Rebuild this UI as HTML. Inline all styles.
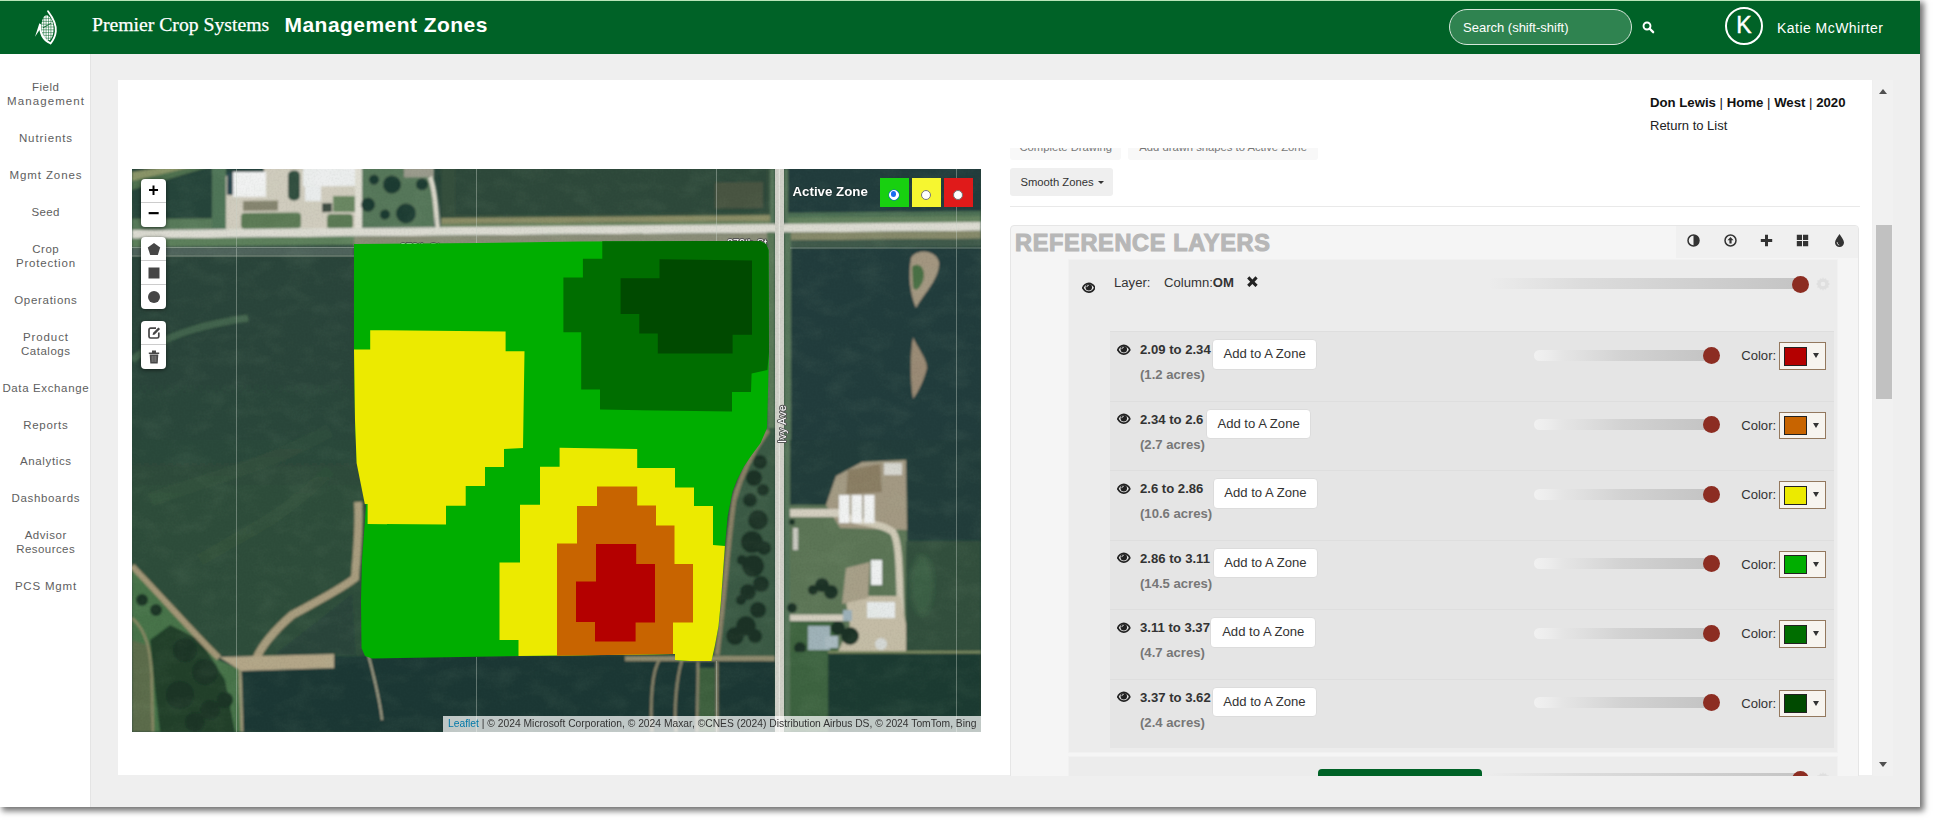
<!DOCTYPE html>
<html lang="en">
<head>
<meta charset="utf-8">
<title>Management Zones</title>
<style>
*{box-sizing:border-box;margin:0;padding:0}
html,body{width:1935px;height:822px;overflow:hidden;background:#fff}
body{font-family:"Liberation Sans",Arial,sans-serif;position:relative}
#app{position:absolute;left:0;top:0;width:1920px;height:807px;background:#efefef;overflow:hidden;box-shadow:3px 3px 6px 1px rgba(0,0,0,.55)}
#hdr{position:absolute;left:0;top:0;width:1920px;height:54px;background:#006227;border-top:1px solid #b9e5b9}
#side{position:absolute;left:0;top:54px;width:91px;height:753px;background:#fff;border-right:1px solid #e4e4e4}
#card{position:absolute;left:118px;top:80px;width:1754px;height:695px;background:#fff;overflow:hidden}

#logo{position:absolute;left:25px;top:4px;width:45px;height:45px}
#brand{-webkit-text-stroke:.25px #fff;position:absolute;left:92px;top:11.3px;font-family:"Liberation Serif","Times New Roman",serif;font-size:19.7px;color:#fff;line-height:24px;white-space:nowrap}
#ptitle{position:absolute;left:284.5px;top:10.8px;font-family:"Liberation Sans",Arial,sans-serif;font-weight:bold;font-size:21px;color:#fff;line-height:26px;white-space:nowrap;letter-spacing:.46px}
#search{position:absolute;left:1449px;top:8px;width:183px;height:36px;border:1px solid #d6e6da;border-radius:18px;background:#2f8350;color:#fff;font-size:13px;line-height:35px;padding-left:13px;white-space:nowrap}
#sicon{position:absolute;left:1642px;top:20.3px;width:12.5px;height:12.5px}
#avatar{position:absolute;left:1725px;top:6px;width:38px;height:38px;border:2px solid #fff;border-radius:50%;color:#fff;font-size:23px;line-height:33px;text-align:center;-webkit-text-stroke:.45px #fff}
#uname{position:absolute;left:1777px;top:17px;color:#fff;font-size:14px;line-height:20px;white-space:nowrap;letter-spacing:.46px}
.nav{position:absolute;left:0;width:91px;text-align:center;font-size:11.5px;line-height:14px;color:#5e5e5e;white-space:nowrap;letter-spacing:.45px}
#pinfo{position:absolute;left:1650px;top:95px;font-size:13.2px;line-height:15px;color:#111;white-space:nowrap}
#pinfo b{font-weight:bold}
#pret{position:absolute;left:1650px;top:118px;font-size:13px;line-height:15px;color:#222;white-space:nowrap}

#map{position:absolute;left:132px;top:169px;width:849px;height:563px;overflow:hidden;background:#2c4936}
#mapsvg{position:absolute;left:0;top:0;display:block}
.lbar{position:absolute;left:9px;width:25px;background:#fff;border-radius:4px;box-shadow:0 1px 4px rgba(0,0,0,.55)}
.lbar div{width:25px;height:24px;border-bottom:1px solid #ccc;position:relative;text-align:center;color:#000;font-weight:bold;font-family:"Liberation Sans",Arial,sans-serif}
.lbar div:last-child{border-bottom:0}
.lbar svg{position:absolute;left:5.5px;top:5px;width:14px;height:14px}
#az{position:absolute;left:660.5px;top:15px;font-size:13.3px;font-weight:bold;color:#fff;line-height:16px;white-space:nowrap;text-shadow:0 0 2px rgba(0,0,0,.5)}
.zb{position:absolute;top:9px;width:28.6px;height:29px}
.zb i{position:absolute;left:9.2px;top:11.6px;width:10px;height:10px;border-radius:50%;background:#fff;border:1px solid #767676}
.zb i.on{border:1.5px solid #fff;background:#fff;box-shadow:0 0 0 .5px #0a64d8}
.zb i.on:after{content:"";position:absolute;left:.8px;top:.8px;width:5.4px;height:5.4px;border-radius:50%;background:#1a6cf0}
#attr{position:absolute;right:0;bottom:0;height:16px;width:538px;background:rgba(255,255,255,.72);font-size:10.3px;line-height:16px;color:#333;padding-left:5px;white-space:nowrap}
#attr span{color:#0078a8}

#rp{position:absolute;left:1010px;top:147.5px;width:862px;height:628.5px;overflow:hidden;font-size:13.125px;color:#333}
#rp .a{position:absolute}
.dbtn{position:absolute;top:-13px;height:27.4px;padding-top:.6px;background:#f8f8f8;border-radius:3px;color:#777;font-size:11.25px;line-height:27.4px;text-align:center;white-space:nowrap}
#sz{position:absolute;left:0;top:22px;width:102.6px;height:27.6px;background:#efefef;border-radius:3px;font-size:11.25px;line-height:29.2px;padding-left:10.4px;white-space:nowrap;color:#333}
#sz i{display:inline-block;width:0;height:0;border-left:3px solid transparent;border-right:3px solid transparent;border-top:3.5px solid #333;margin-left:4px;vertical-align:2px}
#hr{position:absolute;left:0;top:60px;width:850px;height:1px;background:#e9e9e9}
#pan{position:absolute;left:0;top:79px;width:849px;height:620px;background:#f5f5f5;border:1px solid #e6e6e6;border-radius:4px}
#rlt{position:absolute;left:5px;top:82px;font-size:23.5px;line-height:30px;font-weight:bold;color:#b7b7b7;white-space:nowrap;-webkit-text-stroke:1.1px #b7b7b7;letter-spacing:.68px}
#tb{position:absolute;left:665.6px;top:80px;width:182.4px;height:32px;background:#f0f0f0;border-radius:0 3px 0 0}
#tb svg{position:absolute;top:7.6px;width:13px;height:13px}
#lay{position:absolute;left:58.2px;top:113px;width:770.3px;height:494px;background:#ececec;border:1px solid #f1f1f1}
#lay2{position:absolute;left:58.2px;top:609.5px;width:770.3px;height:60px;background:#ececec;border:1px solid #f1f1f1}
#rows{position:absolute;left:100.2px;top:185.2px;width:723.4px;height:417px;background:#e5e5e5}
.row{position:absolute;left:0;width:723.4px;height:69.5px;border-top:1px solid #dedede}
.row .eye{position:absolute;left:7.3px;top:11.5px;width:13.6px;height:11.5px}
.row .lbl{position:absolute;left:29.8px;top:5.3px;font-weight:bold;line-height:25px;white-space:nowrap}
.row .lbl span{color:#777}
.row .btn{position:absolute;top:7.3px;width:105.6px;height:30.5px;background:#fff;border:1px solid #dcdcdc;border-radius:4px;text-align:center;line-height:28.5px;font-size:13.1px;color:#333;white-space:nowrap}
.trk{position:absolute;height:11px;border-radius:6px}
.thumb{position:absolute;width:17px;height:17px;border-radius:50%;background:#8c2d22}
.row .col{position:absolute;left:631px;top:16.1px;line-height:16px}
.sp{position:absolute;left:669px;top:10px;width:46.6px;height:27.4px;border:1px solid #93785e;background:#f7f4ef}
.sp b{position:absolute;left:3.8px;top:3.6px;width:23px;height:19px;border:1px solid #222}
.sp i{position:absolute;left:33.2px;top:10px;width:0;height:0;border-left:3.2px solid transparent;border-right:3.2px solid transparent;border-top:5.4px solid #333}
</style>
</head>
<body>
<div id="app">
  <div id="hdr">
    <svg id="logo" viewBox="25 5 45 45">
      <path d="M46.500 15.300C49.500 15.300 53.600 21 53.600 28.500C53.600 35 51.500 40.200 49 40.200C45.500 40.200 41.400 34 41.400 27C41.400 20.500 43.500 15.300 46.500 15.300Z" fill="#fff"/>
      <g stroke="#006227" stroke-width=".5" fill="none"><path d="M43.700 17V38M46.100 15V40M48.500 15V41M50.900 17V40"/><path d="M41 18.600H54M41 21.400H54M41 24.200H54M41 27H54M41 29.800H54M41 32.600H54M41 35.400H54M41 38.200H54"/></g>
      <path d="M43 27.800L50.800 23.400" stroke="#006227" stroke-width=".9"/>
      <path d="M48 11.200C52 16.500 56.600 24 55.800 31.500C55.200 37 52.600 41 50.600 43.400" stroke="#fff" stroke-width="1.900" fill="none" stroke-linecap="round"/>
      <path d="M35 36.800L39.400 23.200L41.200 24.600C40.300 30.500 43.500 38.500 50.800 42.400L49.900 44.100C44 41.800 40.300 36.500 39.500 30Z" fill="#fff"/>
    </svg>
    <div id="brand">Premier Crop Systems</div>
    <div id="ptitle">Management Zones</div>
    <div id="search">Search (shift-shift)</div>
    <svg id="sicon" viewBox="0 0 13 13"><circle cx="5.2" cy="5.2" r="3.6" fill="none" stroke="#fff" stroke-width="2"/><path d="M7.8 7.8 L11.6 11.6" stroke="#fff" stroke-width="2.4" stroke-linecap="round"/></svg>
    <div id="avatar">K</div>
    <div id="uname">Katie McWhirter</div>
  </div>
  <div id="side">
    <div class="nav" style="top:25.5px;letter-spacing:0.49px;padding-left:0.49px">Field</div>
    <div class="nav" style="top:40px;letter-spacing:1.10px;padding-left:1.10px">Management</div>
    <div class="nav" style="top:77px;letter-spacing:0.89px;padding-left:0.89px">Nutrients</div>
    <div class="nav" style="top:114px;letter-spacing:0.91px;padding-left:0.91px">Mgmt Zones</div>
    <div class="nav" style="top:151px;letter-spacing:0.33px;padding-left:0.33px">Seed</div>
    <div class="nav" style="top:188px;letter-spacing:0.50px;padding-left:0.50px">Crop</div>
    <div class="nav" style="top:202px;letter-spacing:0.81px;padding-left:0.81px">Protection</div>
    <div class="nav" style="top:239px;letter-spacing:0.72px;padding-left:0.72px">Operations</div>
    <div class="nav" style="top:276px;letter-spacing:0.91px;padding-left:0.91px">Product</div>
    <div class="nav" style="top:290px;letter-spacing:0.53px;padding-left:0.53px">Catalogs</div>
    <div class="nav" style="top:327px;letter-spacing:0.63px;padding-left:0.63px">Data Exchange</div>
    <div class="nav" style="top:364px;letter-spacing:0.71px;padding-left:0.71px">Reports</div>
    <div class="nav" style="top:400px;letter-spacing:0.65px;padding-left:0.65px">Analytics</div>
    <div class="nav" style="top:437px;letter-spacing:0.66px;padding-left:0.66px">Dashboards</div>
    <div class="nav" style="top:474px;letter-spacing:0.56px;padding-left:0.56px">Advisor</div>
    <div class="nav" style="top:488px;letter-spacing:0.43px;padding-left:0.43px">Resources</div>
    <div class="nav" style="top:525px;letter-spacing:0.80px;padding-left:0.80px">PCS Mgmt</div>
  </div>
  <div id="card"></div>
  <div id="map">
<svg id="mapsvg" width="849" height="563" viewBox="132 169 849 563">
<defs>
<filter id="b1" x="-5%" y="-5%" width="110%" height="110%"><feGaussianBlur stdDeviation="1"/></filter>
<filter id="b2" x="-10%" y="-10%" width="120%" height="120%"><feGaussianBlur stdDeviation="2.2"/></filter>
<filter id="b05" x="-5%" y="-5%" width="110%" height="110%"><feGaussianBlur stdDeviation=".6"/></filter>
<filter id="nz" x="0" y="0" width="100%" height="100%"><feTurbulence type="fractalNoise" baseFrequency=".035 .06" numOctaves="4" seed="4" result="t"/><feColorMatrix in="t" type="matrix" values="0 0 0 0 .5  0 0 0 0 .68  0 0 0 0 .45  0 0 0 1.5 -.6"/></filter>
<filter id="nz2" x="0" y="0" width="100%" height="100%"><feTurbulence type="fractalNoise" baseFrequency=".5" numOctaves="2" seed="9" result="t"/><feColorMatrix in="t" type="matrix" values="0 0 0 0 0  0 0 0 0 0  0 0 0 0 0  0 0 0 1.3 -.55"/></filter>
<linearGradient id="lf" x1="0" y1="0" x2="0" y2="1"><stop offset="0" stop-color="#29453a"/><stop offset=".42" stop-color="#2a463a"/><stop offset=".6" stop-color="#2f4e3b"/><stop offset="1" stop-color="#2f4e3a"/></linearGradient>
</defs>
<rect x="132" y="169" width="849" height="563" fill="#29453a"/>
<g filter="url(#b1)">
<g transform="translate(132 0) skewY(-0.54) translate(-132 0)">
<rect x="132" y="160" width="88" height="62" fill="#27443a"/>
<polygon points="132,172 175,166 215,166 132,186" fill="#8a9468"/>
<polygon points="132,181 200,166 215,166 132,190" fill="#4f7150"/>
<rect x="132" y="219" width="88" height="11" fill="#587a5a"/>
<rect x="212" y="160" width="20" height="70" fill="#4f7458"/>
<rect x="226" y="160" width="132" height="71" fill="#d0ccbe"/>
<rect x="226" y="160" width="38" height="17" fill="#23403a"/>
<rect x="233" y="173" width="33" height="25" fill="#f1f2f2"/>
<rect x="227" y="174" width="6" height="22" fill="#2a4650"/>
<rect x="241" y="214" width="60" height="16" rx="4" fill="#5b7a55"/>
<rect x="243" y="202" width="35" height="10" fill="#86856f"/>
<rect x="303" y="160" width="53" height="28" fill="#eceeee"/>
<rect x="305" y="188" width="16" height="15" fill="#e9ecec"/>
<rect x="288" y="172" width="12" height="30" rx="5" fill="#30503f"/>
<rect x="327" y="216" width="26" height="15" rx="4" fill="#5b7a55"/>
<rect x="333" y="198" width="22" height="16" fill="#6a8762"/>
<rect x="322" y="205" width="10" height="9" fill="#3a4a40"/>
<rect x="355" y="160" width="7" height="71" fill="#e0ded3"/>
<rect x="362" y="160" width="72" height="70" fill="#56775a"/>
<rect x="404" y="160" width="30" height="20" fill="#9a9a8c"/>
<path d="M430 180 C436 192 436 217 438 233" stroke="#d8d5c8" stroke-width="5" fill="none"/>
<circle cx="392" cy="187" r="9" fill="#1f3a33"/>
<circle cx="406" cy="216" r="10" fill="#1f3a33"/>
<circle cx="368" cy="207" r="7" fill="#1f3a33"/>
<circle cx="422" cy="187" r="6" fill="#1f3a33"/>
<circle cx="385" cy="217" r="5" fill="#1f3a33"/>
<circle cx="374" cy="182" r="5" fill="#1f3a33"/>
<circle cx="447" cy="182" r="7" fill="#1f3a33"/>
<rect x="441" y="160" width="333" height="62" fill="#35503e"/>
<rect x="455" y="160" width="312" height="58" fill="#2f4a3b"/>
<rect x="441" y="221" width="333" height="6" fill="#8b8d66"/>
<rect x="441" y="227" width="333" height="4" fill="#6d8460"/>
<rect x="715" y="188" width="48" height="26" fill="#5e5f48" opacity=".55"/>
<rect x="786" y="160" width="195" height="60" fill="#233c3d"/>
<rect x="786" y="219" width="195" height="6" fill="#4d7054"/>
<rect x="786" y="224" width="195" height="7" fill="#64825f"/>
<rect x="132" y="230" width="849" height="8.7" fill="#dcdbd2"/>
<rect x="132" y="238.7" width="222" height="8.3" fill="#5d805c"/>
<rect x="354" y="238.7" width="420" height="10" fill="#8a8d78"/>
<rect x="786" y="238.7" width="195" height="8" fill="#86896a"/>
<rect x="786" y="246.7" width="195" height="8" fill="#3f5a4c"/>
</g>
<rect x="132" y="247" width="222" height="9" fill="#50645c"/>
<rect x="132" y="256.5" width="236" height="400" fill="url(#lf)"/>
<path d="M132 360 C170 330 220 322 248 318" stroke="#4d7255" stroke-width="7" fill="none" opacity=".7"/>
<path d="M150 500 C200 480 260 470 330 430" stroke="#3c6044" stroke-width="14" fill="none" opacity=".25"/>
<path d="M200 560 C250 530 280 520 330 470" stroke="#395c40" stroke-width="12" fill="none" opacity=".25"/>
<rect x="790" y="248" width="191" height="300" fill="#233c3d"/>
<path d="M911 258 C917 248 936 250 939 262 C940 278 925 292 916 308 C910 294 908 276 911 258Z" fill="#a39680"/>
<path d="M912 267 C918 261 927 268 923 281 C919 290 915 292 913 287Z" fill="#4a6f45"/>
<path d="M913 337 C917 347 927 359 927 368 C924 380 919 391 913 399 C910 381 910 353 913 337Z" fill="#9a8a74"/>
<rect x="767" y="232" width="8" height="500" fill="#5a7858"/>
<rect x="784" y="232" width="7" height="500" fill="#56755a"/>
<rect x="784" y="169" width="4" height="55" fill="#56755a"/>
<rect x="770" y="169" width="5" height="55" fill="#56755a"/>
<polygon points="769,428 775,428 775,660 712,660 719,626 725,547 733,491 744,467 761,443" fill="#3b5a44"/>
<path d="M768 430 C752 452 740 478 734 500 C729 530 726 580 717 655" stroke="#8a8066" stroke-width="5" fill="none"/>
<circle cx="760" cy="462" r="7" fill="#1b3328"/>
<circle cx="754" cy="478" r="8" fill="#1b3328"/>
<circle cx="763" cy="490" r="6" fill="#1b3328"/>
<circle cx="750" cy="500" r="7" fill="#1b3328"/>
<circle cx="758" cy="520" r="10" fill="#1b3328"/>
<circle cx="752" cy="542" r="11" fill="#1b3328"/>
<circle cx="764" cy="548" r="7" fill="#1b3328"/>
<circle cx="753" cy="566" r="11" fill="#1b3328"/>
<circle cx="761" cy="584" r="8" fill="#1b3328"/>
<circle cx="748" cy="592" r="8" fill="#1b3328"/>
<circle cx="758" cy="610" r="8" fill="#1b3328"/>
<circle cx="746" cy="626" r="10" fill="#1b3328"/>
<circle cx="735" cy="636" r="9" fill="#1b3328"/>
<circle cx="755" cy="636" r="7" fill="#1b3328"/>
<circle cx="742" cy="560" r="5" fill="#1b3328"/>
<circle cx="741" cy="600" r="5" fill="#1b3328"/>
<rect x="790" y="440" width="191" height="105" fill="#223c3a"/>
<polygon points="790,505 826,505 836,478 862,462 906,460 907,541 916,652 790,652" fill="#5b7556"/>
<polygon points="826,505 836,476 862,462 906,460 907,530 840,528" fill="#a39983"/>
<polygon points="848,470 880,464 882,492 846,494" fill="#8a7d63"/>
<rect x="790" y="509" width="55" height="8" fill="#d3cebf"/>
<path d="M843 516 C860 524 880 522 893 532 C902 545 898 600 903 648" stroke="#cfc9b6" stroke-width="7" fill="none"/>
<polygon points="845,596 900,596 912,652 838,652 850,625" fill="#c4bca6"/>
<polygon points="846,568 870,562 868,598 842,604" fill="#a79f88"/>
<rect x="790" y="614.5" width="58" height="6.5" fill="#d3cebf"/>
<rect x="790" y="621" width="48" height="32" fill="#41653f"/>
<rect x="906" y="541" width="75" height="111" fill="#31503d"/>
<ellipse cx="922" cy="585" rx="12" ry="30" fill="#4a7050" opacity=".45" filter="url(#b2)"/>
<rect x="839" y="495" width="10.5" height="28" fill="#f2f3f3"/><rect x="851.5" y="495" width="10.5" height="28" fill="#f2f3f3"/><rect x="864" y="495" width="10.5" height="28" fill="#f2f3f3"/>
<rect x="871" y="560" width="11" height="25" fill="#eef0f0"/>
<rect x="867" y="602" width="28" height="16" fill="#e6eaea"/>
<rect x="808" y="626" width="22" height="24" fill="#9fb2b8"/><rect x="825" y="636" width="13" height="12" fill="#a9bac0"/>
<rect x="843" y="610" width="9" height="11" fill="#9cb0b8"/>
<circle cx="881" cy="644" r="6" fill="#d5d8d6"/>
<rect x="884" y="463" width="18" height="12" fill="#d6d6cf"/>
<rect x="793" y="528" width="5" height="22" fill="#c9c9c0"/>
<circle cx="822" cy="585" r="7" fill="#1c3326"/>
<circle cx="831" cy="592" r="7" fill="#1c3326"/>
<circle cx="813" cy="590" r="5" fill="#1c3326"/>
<circle cx="792" cy="608" r="5" fill="#1c3326"/>
<circle cx="850" cy="636" r="9" fill="#1c3326"/>
<circle cx="838" cy="628" r="7" fill="#1c3326"/>
<circle cx="792" cy="522" r="3" fill="#1c3326"/>
<circle cx="800" cy="648" r="6" fill="#1c3326"/>
<rect x="132" y="656" width="643" height="76" fill="#1d3836"/>
<rect x="828" y="653" width="153" height="79" fill="#1d3a30"/>
<rect x="790" y="652" width="38" height="80" fill="#3d6440"/>
<rect x="828" y="651" width="153" height="2.5" fill="#7d8a60"/>
<rect x="625" y="656" width="150" height="5" fill="#8e8a6e"/>
<rect x="699" y="668" width="16" height="64" fill="#3c5f3c"/>
<path d="M660 659 C652 670 650 700 652 732 M682 660 C676 680 674 710 676 732 M698 662 L697 732 M717 662 L717 732" stroke="#8c866c" stroke-width="2.5" fill="none"/>
<polygon points="132,568 150,585 217,659 241,670 241,732 132,732" fill="#467348"/>
<polygon points="132,640 150,646 154,732 132,732" fill="#5b6c4c"/>
<polygon points="150,640 170,625 200,640 225,680 235,732 160,732 155,690" fill="#21402c"/>
<circle cx="185" cy="650" r="12" fill="#1a3526"/>
<circle cx="205" cy="672" r="13" fill="#1a3526"/>
<circle cx="180" cy="695" r="14" fill="#1a3526"/>
<circle cx="210" cy="710" r="10" fill="#1a3526"/>
<circle cx="142" cy="600" r="6" fill="#1a3526"/>
<circle cx="156" cy="610" r="6" fill="#1a3526"/>
<circle cx="195" cy="722" r="10" fill="#1a3526"/>
<circle cx="225" cy="700" r="8" fill="#1a3526"/>
<path d="M132 566 C160 595 200 640 219 658" stroke="#a39677" stroke-width="6" fill="none"/>
<path d="M358 502 C360 530 356 560 355 578 C340 590 310 605 292 615 C275 630 262 645 256 659" stroke="#a89c7e" stroke-width="8" fill="none"/>
<polygon points="274,655 352,594 356,655" fill="#29453a"/>
<polygon points="219,657 334,654 334,668 241,671" fill="#b3a688"/>
<path d="M240 670 L242 732" stroke="#9d9778" stroke-width="3" fill="none"/>
<path d="M132 618 C146 630 152 650 152 690 L153 732" stroke="#8a8a66" stroke-width="2.5" fill="none"/>
<path d="M367 650 C375 680 380 700 382 720" stroke="#a9a58c" stroke-width="2" fill="none"/>
</g>
<rect x="775" y="169" width="9" height="563" fill="#d0d0c8"/>
<rect x="778.8" y="169" width="1" height="563" fill="#e6e6e0"/>
<rect x="132" y="169" width="849" height="563" filter="url(#nz)" opacity=".09"/>
<rect x="132" y="169" width="849" height="563" filter="url(#nz2)" opacity=".06"/>
<g stroke="#c9d3c9" stroke-width="1" opacity=".4"><path d="M236.5 169V732M476.5 169V243M476.5 657V732M956.5 169V732M716.5 169V241M716.5 661V732"/><path d="M132 247.500H354M790 248H981"/></g>
<path d="M132 256H354" stroke="#a9b5a6" stroke-width="1" opacity=".6"/>
<g font-family="Liberation Sans,Arial,sans-serif" font-size="11" fill="#fff" stroke="#555" stroke-width="1.8" paint-order="stroke" stroke-linejoin="round"><text x="400" y="250.500" textLength="40">270th St</text><text x="727" y="247" textLength="40">270th St</text><text transform="translate(785.5,443) rotate(-90)" textLength="38">Ivy Ave</text></g>
<polygon points="354,244 480,243 580,241.5 700,241 760,241 766,244 768.5,250 769,352 767,428 760.6,443 751,456 743.6,467 737,480 732.6,491.5 727.7,516 724.8,547.5 721,600 718.5,626 715,645 711.5,661 690,661 675,660 675,654 520,656 372,658.5 365,656 361.5,648 361,600 362,560 365,520 366,506 362,485 357,463 355,420 354,349" fill="#00ae00"/>
<polygon points="370.2,330.2 505.6,331.5 505.6,351.2 524.5,351.2 523,448 504,449 504,467 485,467 485,486 465.7,486 465.7,505.8 446,505.8 446,524.5 367.6,524 367.6,504 364.8,504 361,485 356.6,463 355,420 354,349.4 370.2,349.4" fill="#ecea00"/>
<polygon points="602.3,241.3 700,241 760,241 766,244 768.5,250 769,352 767.4,370 751.6,373.6 751,392 732,392 732,411.4 600,409.6 600,389.4 581.2,389.4 581.2,332.2 563.4,332.2 563.4,277.5 582.9,277.5 582.9,258.7 602.3,258.7" fill="#006e00"/>
<polygon points="659.5,259.2 752,260.4 752,334.7 732.6,334.7 732.6,353.4 657.8,353.4 657.8,333.5 639.3,333.5 639.3,314 620.6,314 620.6,278.2 659.5,278.2" fill="#004a00"/>
<polygon points="559.6,447.8 637.2,449 637.2,468 675,468 675,487.4 694,487.4 694,506 713,506 713,545 724.9,546 721,600 718.5,626 715,645 711.5,661 690,661 675,660 675,654 518.5,656 518.5,640 499.5,640 499.5,562.4 520,562.4 520,504.8 540,504.8 540,466.8 559.6,466.8" fill="#ecea00"/>
<polygon points="597,486.5 637.2,486.5 637.2,505.4 656,505.4 656,525.4 674.5,525.4 674.5,564 693,564 693,622.5 673,622.5 673,654 557,655.8 557,543.4 577,543.4 577,506 597,506" fill="#c86400"/>
<polygon points="596,544 636.2,544 636.2,564 655,564 655,622.5 635.6,622.5 635.6,641.5 595,641.5 595,622 576,622 576,581.4 596,581.4" fill="#b40000"/>
</svg>
    <div class="lbar" style="top:10px"><div style="font-size:18px;line-height:23px">+</div><div style="font-size:20px;line-height:21px">&#8722;</div></div>
    <div class="lbar" style="top:68px">
      <div><svg viewBox="0 0 14 14"><polygon points="7,1 13.2,5.6 10.8,13 3.2,13 .8,5.6" fill="#464646"/></svg></div>
      <div><svg viewBox="0 0 14 14"><rect x="1.5" y="1.5" width="11" height="11" fill="#464646"/></svg></div>
      <div><svg viewBox="0 0 14 14"><circle cx="7" cy="7" r="6" fill="#464646"/></svg></div>
    </div>
    <div class="lbar" style="top:152px">
      <div><svg viewBox="0 0 14 14"><path d="M9 2.2H3.6A1.6 1.6 0 0 0 2 3.8v6.6A1.6 1.6 0 0 0 3.6 12h6.6a1.6 1.6 0 0 0 1.6-1.6V6.5" fill="none" stroke="#464646" stroke-width="1.7"/><path d="M5.6 8.9l.5-2.2 5.3-5.3 1.7 1.7-5.3 5.3z" fill="#464646"/></svg></div>
      <div><svg viewBox="0 0 14 14"><path d="M1.800 2.400h10.400v1.500H1.800zM5 .6h4v1.900H5zM2.700 4.600h8.600l-.6 8.800H3.300z" fill="#484848"/><path d="M5.200 5.800v6.200M7 5.800v6.200M8.800 5.800v6.200" stroke="#9a9a9a" stroke-width=".7"/></svg></div>
    </div>
    <div id="az">Active Zone</div>
    <div class="zb" style="left:748px;background:#18d010"><i class="on"></i></div>
    <div class="zb" style="left:780px;background:#f6f630"><i></i></div>
    <div class="zb" style="left:812px;background:#e01a1a"><i></i></div>
    <div id="attr"><span>Leaflet</span> | &copy; 2024 Microsoft Corporation, &copy; 2024 Maxar, &copy;CNES (2024) Distribution Airbus DS, &copy; 2024 TomTom, Bing</div>
  </div>
  <div id="rp"><div style="position:absolute;left:0;top:-1.5px;width:862px;height:630px">
    <div class="dbtn" style="left:0;width:111.4px">Complete Drawing</div>
    <div class="dbtn" style="left:117.8px;width:190.6px">Add drawn shapes to Active Zone</div>
    <div id="sz">Smooth Zones<i></i></div>
    <div id="hr"></div>
    <div id="pan"></div>
    <div id="tb">
      <svg style="left:11.2px" viewBox="0 0 13 13"><circle cx="6.500" cy="6.500" r="5.500" fill="none" stroke="#333" stroke-width="1.500"/><path d="M6.500 1a5.500 5.500 0 0 1 0 11z" fill="#333"/></svg>
      <svg style="left:48px" viewBox="0 0 13 13"><circle cx="6.500" cy="6.500" r="5.500" fill="none" stroke="#333" stroke-width="1.500"/><path d="M6.500 3.100l3 3.200H7.600v3.200H5.400V6.300H3.500z" fill="#333"/></svg>
      <svg style="left:84.2px" viewBox="0 0 13 13"><path d="M5 .8h3v4.200h4.200v3H8v4.200H5V8H.8V5H5z" fill="#333"/></svg>
      <svg style="left:120.9px" viewBox="0 0 13 13"><path d="M.8.800h5.200v5.200H.8zM7 .8h5.200v5.200H7zM.8 7h5.200v5.200H.8zM7 7h5.200v5.200H7z" fill="#333"/></svg>
      <svg style="left:157.6px" viewBox="0 0 13 13"><path d="M6.500 0C8 2.800 11 5.600 11 8.600a4.500 4.400 0 0 1-9 0C2 5.600 5 2.800 6.500 0z" fill="#333"/><path d="M4.200 8.200c0 1.500.8 2.600 2 2.900" stroke="#f0f0f0" stroke-width=".9" fill="none"/></svg>
    </div>
    <div id="rlt">REFERENCE LAYERS</div>
    <div id="lay"></div>
    <div id="lay2"></div>
    <svg class="a" style="left:71.700px;top:135.700px;width:13.600px;height:11.500px" viewBox="0 0 14 11.500"><path d="M7 .4C3.700.4 1.200 2.800.1 5.300c-.1.300-.1.600 0 .9C1.200 8.700 3.700 11.100 7 11.100s5.800-2.400 6.900-4.900c.1-.3.1-.6 0-.9C12.800 2.800 10.300.4 7 .4z" fill="#222"/><path d="M7 2.100c-2.500 0-4.300 1.800-5.200 3.650C2.700 7.600 4.500 9.400 7 9.400s4.300-1.800 5.200-3.650C11.300 3.900 9.500 2.100 7 2.100z" fill="#ececec"/><circle cx="7" cy="5.300" r="3.300" fill="#222"/><path d="M5 5.100a2 2 0 0 1 2-1.900" stroke="#ececec" stroke-width=".9" fill="none"/></svg>
    <div class="a" style="left:104px;top:128.500px;line-height:16px;white-space:nowrap">Layer:</div>
    <div class="a" style="left:154px;top:128.500px;line-height:16px;white-space:nowrap">Column:<b>OM</b></div>
    <svg class="a" style="left:236.4px;top:129.600px;width:12.800px;height:11.400px" viewBox="0 0 11.600 10.400"><path d="M1 2.300L3 .3l2.800 2.900L8.600.3l2 2-2.800 2.900 2.800 2.900-2 2-2.800-2.900L3 10.100l-2-2 2.800-2.900z" fill="#222"/></svg>
    <div class="trk" style="left:478px;top:132.3px;width:313px;background:linear-gradient(90deg,rgba(236,236,236,0) 0,#dcdcdc 30%,#c4c4c4 100%)"></div>
    <div class="thumb" style="left:782px;top:129.500px"></div>
    <svg class="a" style="left:805.500px;top:131.200px;width:14px;height:14px" viewBox="0 0 14 14"><path d="M7 0l1 2 2-.8.6 2.100 2.200.2-.6 2.100L14 7l-1.800 1.400.6 2.100-2.200.2-.6 2.100-2-.8-1 2-1-2-2 .8-.6-2.100-2.200-.2.600-2.100L0 7l1.800-1.400-.6-2.100 2.200-.2.600-2.100 2 .8z" fill="#dfdfdf"/><circle cx="7" cy="7" r="2.300" fill="#ececec"/></svg>
    <div id="rows">
      <div class="row" style="top:0px"><svg class="eye" viewBox="0 0 14 11.5"><path d="M7 .4C3.7 .4 1.2 2.8 .1 5.3c-.1.3-.1.6 0 .9C1.2 8.7 3.7 11.1 7 11.1s5.800-2.400 6.900-4.900c.1-.3.1-.6 0-.9C12.800 2.800 10.300.4 7 .4z" fill="#222"/><path d="M7 2.100c-2.500 0-4.300 1.800-5.200 3.650C2.700 7.600 4.500 9.400 7 9.400s4.300-1.800 5.200-3.650C11.300 3.900 9.500 2.100 7 2.100z" fill="#e5e5e5"/><circle cx="7" cy="5.300" r="3.300" fill="#222"/><path d="M5 5.100a2 2 0 0 1 2-1.900" stroke="#e5e5e5" stroke-width=".9" fill="none"/></svg><div class="lbl">2.09 to 2.34<br><span>(1.2 acres)</span></div><div class="btn" style="left:101.6px">Add to A Zone</div><div class="trk" style="left:423.5px;top:17.4px;width:178px;background:linear-gradient(90deg,rgba(255,255,255,.45) 0,rgba(245,245,245,.45) 8%,rgba(229,229,229,.2) 16%,rgba(220,220,220,.7) 28%,#d2d2d2 50%,#c3c3c3 100%)"></div><div class="thumb" style="left:592.8px;top:14.5px"></div><div class="col">Color:</div><div class="sp"><b style="background:#b40000"></b><i></i></div></div>
      <div class="row" style="top:69.5px"><svg class="eye" viewBox="0 0 14 11.5"><path d="M7 .4C3.7 .4 1.2 2.8 .1 5.3c-.1.3-.1.6 0 .9C1.2 8.7 3.7 11.1 7 11.1s5.800-2.400 6.900-4.900c.1-.3.1-.6 0-.9C12.800 2.800 10.300.4 7 .4z" fill="#222"/><path d="M7 2.100c-2.500 0-4.300 1.800-5.200 3.650C2.700 7.600 4.500 9.400 7 9.400s4.300-1.800 5.200-3.650C11.300 3.900 9.500 2.100 7 2.100z" fill="#e5e5e5"/><circle cx="7" cy="5.300" r="3.300" fill="#222"/><path d="M5 5.100a2 2 0 0 1 2-1.900" stroke="#e5e5e5" stroke-width=".9" fill="none"/></svg><div class="lbl">2.34 to 2.6<br><span>(2.7 acres)</span></div><div class="btn" style="left:95.6px">Add to A Zone</div><div class="trk" style="left:423.5px;top:17.4px;width:178px;background:linear-gradient(90deg,rgba(255,255,255,.45) 0,rgba(245,245,245,.45) 8%,rgba(229,229,229,.2) 16%,rgba(220,220,220,.7) 28%,#d2d2d2 50%,#c3c3c3 100%)"></div><div class="thumb" style="left:592.8px;top:14.5px"></div><div class="col">Color:</div><div class="sp"><b style="background:#c86400"></b><i></i></div></div>
      <div class="row" style="top:139px"><svg class="eye" viewBox="0 0 14 11.5"><path d="M7 .4C3.7 .4 1.2 2.8 .1 5.3c-.1.3-.1.6 0 .9C1.2 8.7 3.7 11.1 7 11.1s5.800-2.400 6.900-4.900c.1-.3.1-.6 0-.9C12.800 2.800 10.300.4 7 .4z" fill="#222"/><path d="M7 2.100c-2.500 0-4.300 1.800-5.200 3.650C2.700 7.600 4.500 9.400 7 9.400s4.300-1.800 5.200-3.650C11.300 3.900 9.500 2.100 7 2.100z" fill="#e5e5e5"/><circle cx="7" cy="5.300" r="3.300" fill="#222"/><path d="M5 5.100a2 2 0 0 1 2-1.900" stroke="#e5e5e5" stroke-width=".9" fill="none"/></svg><div class="lbl">2.6 to 2.86<br><span>(10.6 acres)</span></div><div class="btn" style="left:102.4px">Add to A Zone</div><div class="trk" style="left:423.5px;top:17.4px;width:178px;background:linear-gradient(90deg,rgba(255,255,255,.45) 0,rgba(245,245,245,.45) 8%,rgba(229,229,229,.2) 16%,rgba(220,220,220,.7) 28%,#d2d2d2 50%,#c3c3c3 100%)"></div><div class="thumb" style="left:592.8px;top:14.5px"></div><div class="col">Color:</div><div class="sp"><b style="background:#ecea00"></b><i></i></div></div>
      <div class="row" style="top:208.5px"><svg class="eye" viewBox="0 0 14 11.5"><path d="M7 .4C3.7 .4 1.2 2.8 .1 5.3c-.1.3-.1.6 0 .9C1.2 8.7 3.7 11.1 7 11.1s5.800-2.400 6.900-4.900c.1-.3.1-.6 0-.9C12.800 2.800 10.300.4 7 .4z" fill="#222"/><path d="M7 2.100c-2.500 0-4.300 1.800-5.200 3.650C2.700 7.600 4.500 9.400 7 9.400s4.300-1.800 5.200-3.650C11.300 3.900 9.500 2.100 7 2.100z" fill="#e5e5e5"/><circle cx="7" cy="5.300" r="3.300" fill="#222"/><path d="M5 5.100a2 2 0 0 1 2-1.900" stroke="#e5e5e5" stroke-width=".9" fill="none"/></svg><div class="lbl">2.86 to 3.11<br><span>(14.5 acres)</span></div><div class="btn" style="left:102.4px">Add to A Zone</div><div class="trk" style="left:423.5px;top:17.4px;width:178px;background:linear-gradient(90deg,rgba(255,255,255,.45) 0,rgba(245,245,245,.45) 8%,rgba(229,229,229,.2) 16%,rgba(220,220,220,.7) 28%,#d2d2d2 50%,#c3c3c3 100%)"></div><div class="thumb" style="left:592.8px;top:14.5px"></div><div class="col">Color:</div><div class="sp"><b style="background:#00ae00"></b><i></i></div></div>
      <div class="row" style="top:278px"><svg class="eye" viewBox="0 0 14 11.5"><path d="M7 .4C3.7 .4 1.2 2.8 .1 5.3c-.1.3-.1.6 0 .9C1.2 8.7 3.7 11.1 7 11.1s5.800-2.400 6.900-4.900c.1-.3.1-.6 0-.9C12.800 2.800 10.300.4 7 .4z" fill="#222"/><path d="M7 2.100c-2.500 0-4.300 1.800-5.200 3.650C2.700 7.600 4.500 9.400 7 9.400s4.300-1.800 5.200-3.650C11.300 3.900 9.500 2.100 7 2.100z" fill="#e5e5e5"/><circle cx="7" cy="5.300" r="3.300" fill="#222"/><path d="M5 5.100a2 2 0 0 1 2-1.900" stroke="#e5e5e5" stroke-width=".9" fill="none"/></svg><div class="lbl">3.11 to 3.37<br><span>(4.7 acres)</span></div><div class="btn" style="left:100.3px">Add to A Zone</div><div class="trk" style="left:423.5px;top:17.4px;width:178px;background:linear-gradient(90deg,rgba(255,255,255,.45) 0,rgba(245,245,245,.45) 8%,rgba(229,229,229,.2) 16%,rgba(220,220,220,.7) 28%,#d2d2d2 50%,#c3c3c3 100%)"></div><div class="thumb" style="left:592.8px;top:14.5px"></div><div class="col">Color:</div><div class="sp"><b style="background:#006e00"></b><i></i></div></div>
      <div class="row" style="top:347.5px"><svg class="eye" viewBox="0 0 14 11.5"><path d="M7 .4C3.7 .4 1.2 2.8 .1 5.3c-.1.3-.1.6 0 .9C1.2 8.7 3.7 11.1 7 11.1s5.800-2.400 6.900-4.900c.1-.3.1-.6 0-.9C12.800 2.800 10.300.4 7 .4z" fill="#222"/><path d="M7 2.100c-2.500 0-4.300 1.800-5.200 3.650C2.700 7.600 4.500 9.400 7 9.400s4.300-1.800 5.200-3.650C11.300 3.900 9.500 2.100 7 2.100z" fill="#e5e5e5"/><circle cx="7" cy="5.300" r="3.300" fill="#222"/><path d="M5 5.100a2 2 0 0 1 2-1.900" stroke="#e5e5e5" stroke-width=".9" fill="none"/></svg><div class="lbl">3.37 to 3.62<br><span>(2.4 acres)</span></div><div class="btn" style="left:101.4px">Add to A Zone</div><div class="trk" style="left:423.5px;top:17.4px;width:178px;background:linear-gradient(90deg,rgba(255,255,255,.45) 0,rgba(245,245,245,.45) 8%,rgba(229,229,229,.2) 16%,rgba(220,220,220,.7) 28%,#d2d2d2 50%,#c3c3c3 100%)"></div><div class="thumb" style="left:592.8px;top:14.5px"></div><div class="col">Color:</div><div class="sp"><b style="background:#004a00"></b><i></i></div></div>
    </div>
    <div class="a" style="left:308px;top:623px;width:164px;height:30px;background:#006227;border-radius:4px"></div>
    <div class="trk" style="left:478px;top:627px;width:313px;background:linear-gradient(90deg,rgba(236,236,236,0) 0,#dcdcdc 30%,#c4c4c4 100%)"></div>
    <div class="thumb" style="left:782px;top:624.500px"></div>
    <svg class="a" style="left:805.500px;top:626.200px;width:14px;height:14px" viewBox="0 0 14 14"><path d="M7 0l1 2 2-.8.6 2.100 2.200.2-.6 2.100L14 7l-1.800 1.400.6 2.100-2.200.2-.6 2.100-2-.8-1 2-1-2-2 .8-.6-2.100-2.200-.2.600-2.100L0 7l1.800-1.400-.6-2.100 2.200-.2.600-2.100 2 .8z" fill="#dfdfdf"/><circle cx="7" cy="7" r="2.300" fill="#ececec"/></svg>
  </div></div>
  <div id="sbar">
    <div style="position:absolute;left:1873px;top:80px;width:20px;height:696px;background:#f1f1f1"></div>
    <div style="position:absolute;left:1875.500px;top:225px;width:16.500px;height:173.500px;background:#c1c1c1"></div>
    <div style="position:absolute;left:1879px;top:88.700px;border-left:4.500px solid transparent;border-right:4.500px solid transparent;border-bottom:5px solid #505050"></div>
    <div style="position:absolute;left:1879px;top:762px;border-left:4.500px solid transparent;border-right:4.500px solid transparent;border-top:5px solid #505050"></div>
  </div>
  <div id="pinfo"><b>Don Lewis</b> | <b>Home</b> | <b>West</b> | <b>2020</b></div>
  <div id="pret">Return to List</div>
</div>
</body>
</html>
